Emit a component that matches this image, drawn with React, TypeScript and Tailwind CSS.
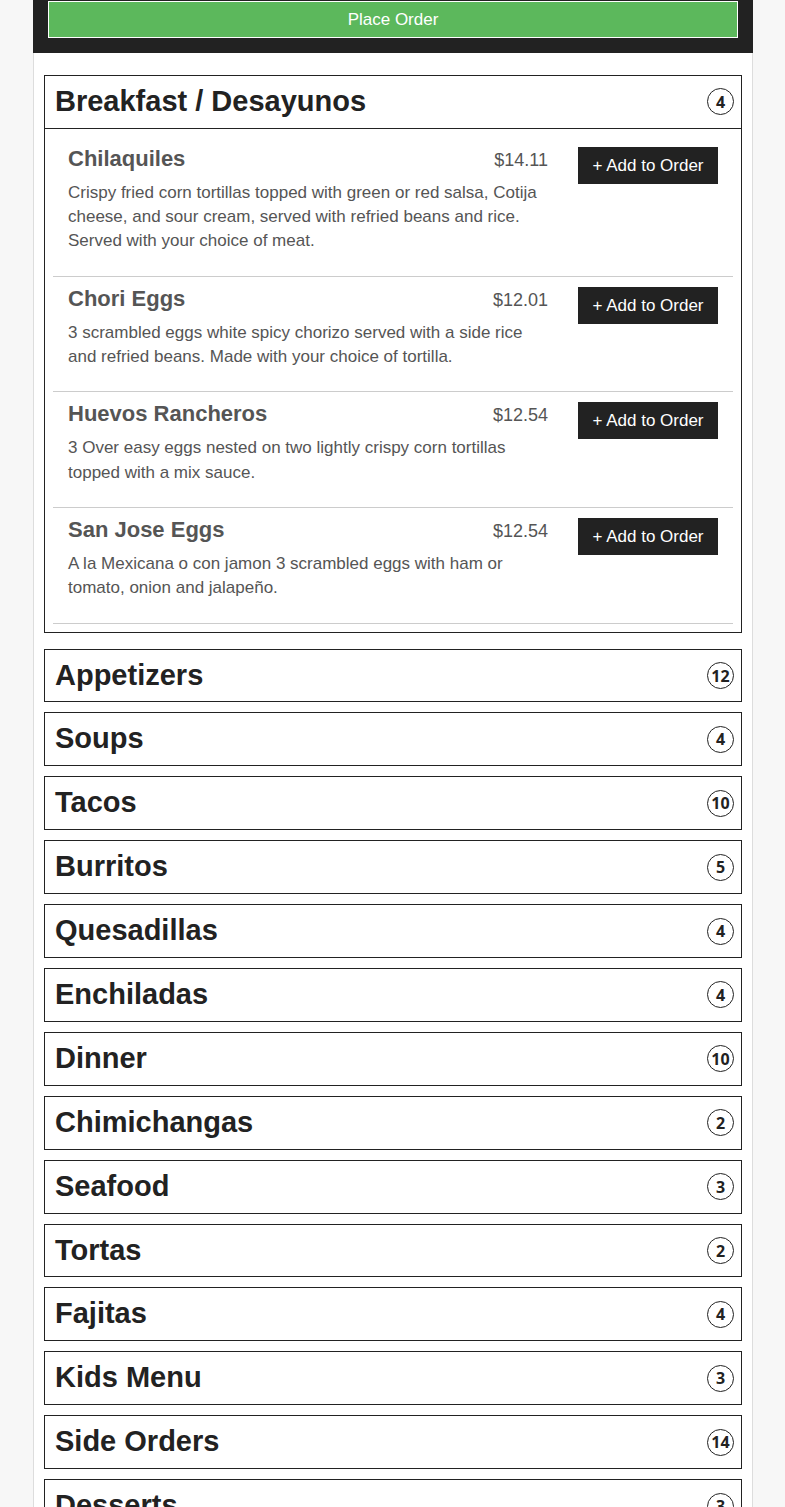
const items = [
  {
    name: "Chilaquiles",
    price: "$14.11",
    desc: "Crispy fried corn tortillas topped with green or red salsa, Cotija cheese, and sour cream, served with refried beans and rice. Served with your choice of meat.",
  },
  {
    name: "Chori Eggs",
    price: "$12.01",
    desc: "3 scrambled eggs white spicy chorizo served with a side rice and refried beans. Made with your choice of tortilla.",
  },
  {
    name: "Huevos Rancheros",
    price: "$12.54",
    desc: "3 Over easy eggs nested on two lightly crispy corn tortillas topped with a mix sauce.",
  },
  {
    name: "San Jose Eggs",
    price: "$12.54",
    desc: "A la Mexicana o con jamon 3 scrambled eggs with ham or tomato, onion and jalapeño.",
  },
];

const categories = [
  { name: "Appetizers", count: 12 },
  { name: "Soups", count: 4 },
  { name: "Tacos", count: 10 },
  { name: "Burritos", count: 5 },
  { name: "Quesadillas", count: 4 },
  { name: "Enchiladas", count: 4 },
  { name: "Dinner", count: 10 },
  { name: "Chimichangas", count: 2 },
  { name: "Seafood", count: 3 },
  { name: "Tortas", count: 2 },
  { name: "Fajitas", count: 4 },
  { name: "Kids Menu", count: 3 },
  { name: "Side Orders", count: 14 },
  { name: "Desserts", count: 3 },
];

function CategoryHeader({ name, count, open }: { name: string; count: number; open?: boolean }) {
  return (
    <div className={`flex items-center justify-between pl-[10px] pr-[7px] py-[10px] ${open ? "border-b border-[#222]" : ""}`}>
      <h3 className="text-[29px] leading-[1.1] font-bold text-[#222]">{name}</h3>
      <span className="w-[27px] h-[27px] rounded-full border border-[#222] flex items-center justify-center font-['Open_Sans',sans-serif] text-[16px] font-bold text-[#222]">
        {count}
      </span>
    </div>
  );
}

export default function App() {
  return (
    <div className="min-h-screen bg-[#f7f7f7] font-['Liberation_Sans',Arial,sans-serif]">
      <div className="w-[720px] ml-[33px]">
        <div className="bg-[#222] pt-px pb-[15px] px-[15px]">
          <button className="w-full h-[37px] bg-[#5cb85c] border border-white text-white text-[17px]">
            Place Order
          </button>
        </div>
        <div className="bg-white border-x border-[#ddd] pt-[22px] px-[10px] pb-10">
          <div className="border border-[#222] mb-4">
            <CategoryHeader name="Breakfast / Desayunos" count={4} open />
            <div className="p-2">
              {items.map((it) => (
                <div key={it.name} className="flex border-b border-[#ccc] pt-[10px] pb-[22px]">
                  <div className="w-[510px] px-[15px]">
                    <div className="flex items-baseline justify-between h-[24px]">
                      <h4 className="text-[22px] leading-[24px] font-bold text-[#555]">{it.name}</h4>
                      <span className="text-[18px] leading-none text-[#555]">{it.price}</span>
                    </div>
                    <p className="mt-[10px] text-[17px] leading-[24.3px] text-[#555]">{it.desc}</p>
                  </div>
                  <div className="flex-1 px-[15px]">
                    <button className="w-full h-[37px] bg-[#222] text-white text-[17px]">+ Add to Order</button>
                  </div>
                </div>
              ))}
            </div>
          </div>
          {categories.map((c) => (
            <div key={c.name} className="border border-[#222] mb-[10px]">
              <CategoryHeader name={c.name} count={c.count} />
            </div>
          ))}
        </div>
      </div>
    </div>
  );
}
